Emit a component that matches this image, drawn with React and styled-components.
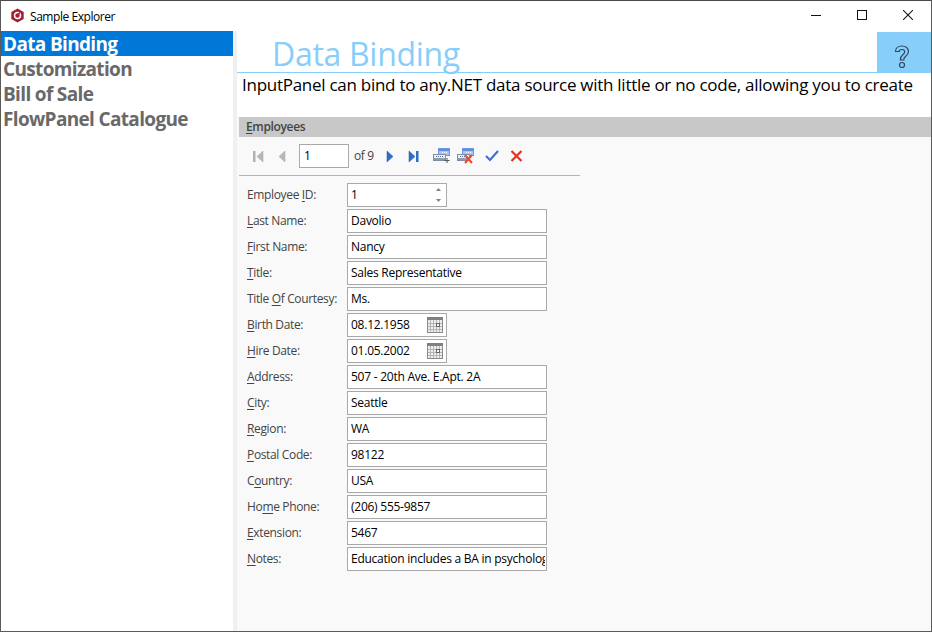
import React from "react";
import styled, { createGlobalStyle } from "styled-components";

const GlobalStyle = createGlobalStyle`
  html, body {
    margin: 0;
    padding: 0;
    background: #fff;
  }
  * {
    box-sizing: border-box;
  }
`;

const FONT = `"Open Sans", "Noto Sans", sans-serif`;

const Window = styled.div`
  width: 932px;
  height: 632px;
  display: flex;
  flex-direction: column;
  background: #fff;
  border: 1px solid #5a5a5a;
  border-top-color: #4a4a4a;
  font-family: ${FONT};
  overflow: hidden;
`;

const TitleBar = styled.div`
  height: 30px;
  flex: none;
  display: flex;
  align-items: center;
  padding: 0 0 2px 9px;
`;

const TitleText = styled.div`
  margin-left: 5px;
  padding-top: 2px;
  font-size: 12px;
  letter-spacing: -0.45px;
  color: #000;
`;

const WindowButtons = styled.div`
  margin-left: auto;
  display: flex;
`;

const WindowButton = styled.div`
  width: 46px;
  height: 28px;
  display: flex;
  align-items: center;
  justify-content: center;
`;

const Body = styled.div`
  flex: 1;
  display: flex;
  min-height: 0;
`;

const Sidebar = styled.div`
  width: 232px;
  flex: none;
  display: flex;
  flex-direction: column;
`;

const NavItem = styled.div`
  height: 25px;
  padding-left: 2px;
  font-size: 19px;
  line-height: 27px;
  font-weight: 700;
  letter-spacing: -0.66px;
  white-space: nowrap;
  background: ${(props) => (props.$active ? "#0078d7" : "transparent")};
  color: ${(props) => (props.$active ? "#fff" : "#696969")};
`;

const Splitter = styled.div`
  width: 4px;
  flex: none;
  background: #f0f0f0;
`;

const Main = styled.div`
  flex: 1;
  min-width: 0;
  display: flex;
  flex-direction: column;
`;

const Header = styled.div`
  height: 42px;
  flex: none;
  display: flex;
  justify-content: space-between;
  border-bottom: 1px solid #87cefa;
`;

const Heading = styled.div`
  margin-left: 35px;
  margin-top: 3px;
  font-size: 32px;
  line-height: 40px;
  letter-spacing: -0.3px;
  color: #87cefa;
`;

const HelpButton = styled.div`
  width: 54px;
  margin-top: 1px;
  background: #87cefa;
  display: flex;
  align-items: center;
  justify-content: center;
  padding: 9px 5px 0 0;
`;

const Description = styled.div`
  height: 44px;
  flex: none;
  padding-left: 5px;
  font-size: 17px;
  line-height: 24px;
  letter-spacing: -0.27px;
  white-space: nowrap;
  color: #000;
`;

const Panel = styled.div`
  flex: 1;
  min-height: 0;
  padding-left: 2px;
  background: #f9f9f9;
`;

const GroupHeader = styled.div`
  height: 20px;
  padding-left: 7px;
  background: #c8c8c8;
  font-size: 12px;
  line-height: 20px;
  font-weight: 600;
  letter-spacing: -0.35px;
  color: #444;
`;

const Key = styled.span`
  text-decoration: underline;
  text-underline-offset: 2px;
`;

const Navigator = styled.div`
  width: 341px;
  height: 39px;
  display: flex;
  align-items: center;
  border-bottom: 1px solid #b4b4b4;
  padding-left: 13px;
`;

const NavIcon = styled.svg`
  flex: none;
  margin-right: ${(props) => props.$gap || 0}px;
`;

const PageInput = styled.div`
  width: 50px;
  height: 24px;
  margin-right: 5px;
  padding-left: 4px;
  background: #fff;
  border: 1px solid #a9a9a9;
  font-size: 12px;
  line-height: 21px;
  color: #000;
`;

const PageCount = styled.div`
  width: 32px;
  padding-bottom: 2px;
  font-size: 12px;
  letter-spacing: -0.35px;
  color: #444;
`;

const Form = styled.div`
  padding: 7px 0 0 8px;
  display: flex;
  flex-direction: column;
  gap: 2px;
`;

const Row = styled.div`
  height: 24px;
  display: flex;
  align-items: center;
`;

const Label = styled.div`
  width: 100px;
  flex: none;
  padding-bottom: 2px;
  font-size: 12px;
  letter-spacing: -0.35px;
  white-space: nowrap;
  color: #444;
`;

const Field = styled.div`
  width: ${(props) => props.$width}px;
  height: 24px;
  display: flex;
  align-items: center;
  padding: 0 1px 0 3px;
  background: #fff;
  border: 1px solid #a9a9a9;
`;

const FieldText = styled.div`
  flex: 1;
  min-width: 0;
  padding-bottom: 2px;
  font-size: 12px;
  letter-spacing: -0.25px;
  white-space: nowrap;
  overflow: hidden;
  color: #000;
`;

const FieldEnd = styled.div`
  flex: none;
  display: flex;
  align-items: center;
  margin-right: ${(props) => props.$right}px;
`;

const FirstIcon = () => (
  <NavIcon width="12" height="12" viewBox="0 0 12 12" $gap={14}>
    <rect x="1" y="1" width="2.5" height="11" fill="#aeb2b6" />
    <path d="M11 1v11L5 6.500z" fill="#b4b8bc" stroke="#a0a4a8" strokeWidth=".5" />
  </NavIcon>
);

const PrevIcon = () => (
  <NavIcon width="8" height="12" viewBox="0 0 8 12" $gap={13}>
    <path d="M7 1v11L1 6.500z" fill="#b4b8bc" stroke="#a0a4a8" strokeWidth=".5" />
  </NavIcon>
);

const NextIcon = () => (
  <NavIcon width="8" height="12" viewBox="0 0 8 12" $gap={14}>
    <path d="M1 1v11l6-5.500z" fill="#2f6fc6" stroke="#2459a8" strokeWidth=".5" />
  </NavIcon>
);

const LastIcon = () => (
  <NavIcon width="11" height="12" viewBox="0 0 11 12" $gap={14}>
    <path d="M1 1v11l6-5.500z" fill="#2f6fc6" stroke="#2459a8" strokeWidth=".5" />
    <rect x="8" y="1" width="2.500" height="11" fill="#2f6fc6" />
  </NavIcon>
);

const Records = () => (
  <g>
    <rect x="5.500" y="0.500" width="11" height="7" fill="#a9c6f2" stroke="#6d96d8" />
    <rect x="6" y="1" width="10" height="2" fill="#5d8fe0" />
    <rect x="0.500" y="6.500" width="12" height="6" fill="#eef1f6" stroke="#7f8ea8" />
    <rect x="1" y="10" width="11" height="2" fill="#8d9bb3" />
    <path d="M3 8.500h1M5 8.500h1M7 8.500h1M9 8.500h1" stroke="#5a6a88" />
    <path d="M9 4.500h1M11 4.500h1M13 4.500h1" stroke="#fff" />
  </g>
);

const AddIcon = () => (
  <NavIcon width="17" height="16" viewBox="0 0 17 16" $gap={7}>
    <Records />
    <path d="M14 10v5M11.500 12.500h5" stroke="#555" />
  </NavIcon>
);

const DeleteIcon = () => (
  <NavIcon width="18" height="16" viewBox="0 0 18 16" $gap={10}>
    <Records />
    <path d="M8 7l7 8M15 7l-7 8" stroke="#ee4a2a" strokeWidth="2" />
  </NavIcon>
);

const ApplyIcon = () => (
  <NavIcon width="14" height="12" viewBox="0 0 14 12" $gap={11}>
    <path d="M1 6l4 4 8-9" fill="none" stroke="#3f6fd0" strokeWidth="2.200" />
  </NavIcon>
);

const CancelIcon = () => (
  <NavIcon width="13" height="12" viewBox="0 0 13 12">
    <path d="M1.500 1l10 10M11.500 1l-10 10" stroke="#e8301c" strokeWidth="2.200" />
  </NavIcon>
);

const Spinner = () => (
  <svg width="7" height="18" viewBox="0 0 7 18">
    <path d="M3.500 2L6 5H1z" fill="#808080" />
    <path d="M3.500 16L6 13H1z" fill="#808080" />
  </svg>
);

const Calendar = () => (
  <svg width="16" height="16" viewBox="0 0 16 16">
    <rect x="0.500" y="0.500" width="15" height="15" fill="#eeeeee" stroke="#8a8a8a" />
    <rect width="16" height="3" fill="#808080" />
    <path
      d="M3.500 3v12M6.500 3v12M9.500 3v12M12.500 3v12M1 6.500h14M1 9.500h14M1 12.500h14"
      stroke="#b5b5b5"
    />
    <rect x="9.500" y="6.500" width="3" height="3" fill="#fff" stroke="#666" />
  </svg>
);

const HexLogo = () => (
  <svg width="15" height="15" viewBox="0 0 15 15">
    <path d="M7.500 0.500l6.200 3.400v7.200l-6.200 3.400-6.200-3.400V3.900z" fill="#a41f35" />
    <circle cx="7.500" cy="7.500" r="3" fill="none" stroke="#fff" strokeWidth="1.500" />
    <path d="M7 8l3-3.500" stroke="#a41f35" strokeWidth="1.500" />
  </svg>
);

const MinimizeGlyph = () => (
  <svg width="10" height="10" viewBox="0 0 10 10">
    <path d="M0 5.500h10" stroke="#111" />
  </svg>
);

const MaximizeGlyph = () => (
  <svg width="10" height="10" viewBox="0 0 10 10">
    <rect x="0.500" y="0.500" width="9" height="9" fill="none" stroke="#111" />
  </svg>
);

const CloseGlyph = () => (
  <svg width="10" height="10" viewBox="0 0 10 10">
    <path d="M0 0l10 10M10 0L0 10" stroke="#111" strokeWidth="1.050" />
  </svg>
);

const HelpMark = () => (
  <svg width="16" height="24" viewBox="0 0 16 24">
    <path
      d="M1.500 6.500C1.500 3 4.500 1 8 1s6.500 2.200 6.500 5.500c0 2.500-1.500 3.800-3 5-1.200 1-1.800 1.700-1.800 3.500H6.300c0-2.800 1-4 2.500-5.200 1.200-1 1.900-1.800 1.900-3 0-1.300-1.100-2.300-2.700-2.300S5.200 5 5.200 6.500z"
      fill="none"
      stroke="#2f4560"
      strokeWidth="1.200"
    />
    <circle cx="8" cy="20" r="2.500" fill="none" stroke="#2f4560" strokeWidth="1.200" />
  </svg>
);

const employee = [
  { label: ["Employee ", "I", "D:"], value: "1", kind: "spin", width: 100 },
  { label: ["", "L", "ast Name:"], value: "Davolio" },
  { label: ["", "F", "irst Name:"], value: "Nancy" },
  { label: ["", "T", "itle:"], value: "Sales Representative" },
  { label: ["Title ", "O", "f Courtesy:"], value: "Ms." },
  { label: ["", "B", "irth Date:"], value: "08.12.1958", kind: "date", width: 100 },
  { label: ["", "H", "ire Date:"], value: "01.05.2002", kind: "date", width: 100 },
  { label: ["", "A", "ddress:"], value: "507 - 20th Ave. E.Apt. 2A" },
  { label: ["", "C", "ity:"], value: "Seattle" },
  { label: ["", "R", "egion:"], value: "WA" },
  { label: ["", "P", "ostal Code:"], value: "98122" },
  { label: ["C", "o", "untry:"], value: "USA" },
  { label: ["Ho", "m", "e Phone:"], value: "(206) 555-9857" },
  { label: ["", "E", "xtension:"], value: "5467" },
  { label: ["", "N", "otes:"], value: "Education includes a BA in psychology from Colorado State University" },
];

const App = () => {
  return (
    <Window>
      <GlobalStyle />
      <TitleBar>
        <HexLogo />
        <TitleText>Sample Explorer</TitleText>
        <WindowButtons>
          <WindowButton>
            <MinimizeGlyph />
          </WindowButton>
          <WindowButton>
            <MaximizeGlyph />
          </WindowButton>
          <WindowButton>
            <CloseGlyph />
          </WindowButton>
        </WindowButtons>
      </TitleBar>
      <Body>
        <Sidebar>
          <NavItem $active>Data Binding</NavItem>
          <NavItem>Customization</NavItem>
          <NavItem>Bill of Sale</NavItem>
          <NavItem>FlowPanel Catalogue</NavItem>
        </Sidebar>
        <Splitter />
        <Main>
          <Header>
            <Heading>Data Binding</Heading>
            <HelpButton>
              <HelpMark />
            </HelpButton>
          </Header>
          <Description>
            InputPanel can bind to any.NET data source with little or no code, allowing you to create
          </Description>
          <Panel>
            <GroupHeader>
              <Key>E</Key>mployees
            </GroupHeader>
            <Navigator>
              <FirstIcon />
              <PrevIcon />
              <PageInput>1</PageInput>
              <PageCount>of 9</PageCount>
              <NextIcon />
              <LastIcon />
              <AddIcon />
              <DeleteIcon />
              <ApplyIcon />
              <CancelIcon />
            </Navigator>
            <Form>
              {employee.map((row) => (
                <Row key={row.value}>
                  <Label>
                    {row.label[0]}
                    <Key>{row.label[1]}</Key>
                    {row.label[2]}
                  </Label>
                  <Field $width={row.width || 200}>
                    <FieldText>{row.value}</FieldText>
                    {row.kind === "spin" && (
                      <FieldEnd $right={3}>
                        <Spinner />
                      </FieldEnd>
                    )}
                    {row.kind === "date" && (
                      <FieldEnd $right={2}>
                        <Calendar />
                      </FieldEnd>
                    )}
                  </Field>
                </Row>
              ))}
            </Form>
          </Panel>
        </Main>
      </Body>
    </Window>
  );
};

export default App;
